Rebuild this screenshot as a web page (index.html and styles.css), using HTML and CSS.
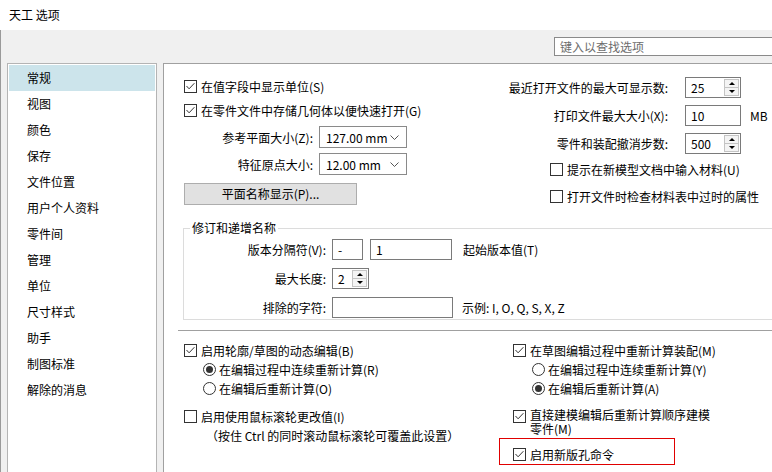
FILE: index.html
```html
<!DOCTYPE html>
<html lang="zh-CN">
<head>
    <meta charset="UTF-8">
    <title>天工 选项</title>
    <link rel="stylesheet" href="styles.css">
</head>
<body>
    <div class="titlebar">天工 选项</div>
    <div class="frame">
        <div class="searchbar">
            <div class="search">键入以查找选项</div>
        </div>
        <div class="body">
            <ul class="nav">
                <li class="active">常规</li>
                <li>视图</li>
                <li>颜色</li>
                <li>保存</li>
                <li>文件位置</li>
                <li>用户个人资料</li>
                <li>零件间</li>
                <li>管理</li>
                <li>单位</li>
                <li>尺寸样式</li>
                <li>助手</li>
                <li>制图标准</li>
                <li>解除的消息</li>
            </ul>

            <div class="panel">
                <div class="top">
                    <div class="top-left">
                        <div class="check-row">
                            <svg class="cb" viewBox="0 0 13 13"><rect x=".5" y=".5" width="12" height="12" fill="#fff" stroke="#333"/><path d="M2.5 6l2.6 2.8 5.3-5.6" fill="none" stroke="#333"/></svg>
                            <span>在值字段中显示单位(S)</span>
                        </div>
                        <div class="check-row">
                            <svg class="cb" viewBox="0 0 13 13"><rect x=".5" y=".5" width="12" height="12" fill="#fff" stroke="#333"/><path d="M2.5 6l2.6 2.8 5.3-5.6" fill="none" stroke="#333"/></svg>
                            <span>在零件文件中存储几何体以便快速打开(G)</span>
                        </div>
                        <div class="field-row first">
                            <span class="label">参考平面大小(Z):</span>
                            <div class="select">
                                <span>127.00 mm</span>
                                <svg class="chev" viewBox="0 0 9 5"><path d="M.5 .5l4 4 4-4" fill="none" stroke="#555"/></svg>
                            </div>
                        </div>
                        <div class="field-row">
                            <span class="label">特征原点大小:</span>
                            <div class="select">
                                <span>12.00 mm</span>
                                <svg class="chev" viewBox="0 0 9 5"><path d="M.5 .5l4 4 4-4" fill="none" stroke="#555"/></svg>
                            </div>
                        </div>
                        <div class="btn">平面名称显示(P)...</div>
                    </div>

                    <div class="top-right">
                        <div class="spin-row">
                            <span class="label">最近打开文件的最大可显示数:</span>
                            <div class="spinbox">
                                <span class="val">25</span>
                                <div class="spin"><span><i class="up"></i></span><span><i class="down"></i></span></div>
                            </div>
                        </div>
                        <div class="spin-row">
                            <span class="label">打印文件最大大小(X):</span>
                            <div class="spinbox">
                                <span class="val">10</span>
                            </div>
                            <span class="unit">MB</span>
                        </div>
                        <div class="spin-row">
                            <span class="label">零件和装配撤消步数:</span>
                            <div class="spinbox">
                                <span class="val">500</span>
                                <div class="spin"><span><i class="up"></i></span><span><i class="down"></i></span></div>
                            </div>
                        </div>
                        <div class="check-row right first">
                            <svg class="cb" viewBox="0 0 13 13"><rect x=".5" y=".5" width="12" height="12" fill="#fff" stroke="#333"/></svg>
                            <span>提示在新模型文档中输入材料(U)</span>
                        </div>
                        <div class="check-row right second">
                            <svg class="cb" viewBox="0 0 13 13"><rect x=".5" y=".5" width="12" height="12" fill="#fff" stroke="#333"/></svg>
                            <span>打开文件时检查材料表中过时的属性</span>
                        </div>
                    </div>
                </div>

                <fieldset class="group">
                    <legend>修订和递增名称</legend>
                    <div class="group-row">
                        <span class="label">版本分隔符(V):</span>
                        <div class="input w-sep">-</div>
                        <div class="input w-start">1</div>
                        <span class="note">起始版本值(T)</span>
                    </div>
                    <div class="group-row">
                        <span class="label">最大长度:</span>
                        <div class="spinbox w-len">
                            <span class="val">2</span>
                            <div class="spin"><span><i class="up"></i></span><span><i class="down"></i></span></div>
                        </div>
                    </div>
                    <div class="group-row">
                        <span class="label">排除的字符:</span>
                        <div class="input w-excl"></div>
                        <span class="note example">示例: I, O, Q, S, X, Z</span>
                    </div>
                </fieldset>

                <div class="sep"></div>

                <div class="bottom">
                    <div class="bcol left">
                        <div class="check-row b">
                            <svg class="cb" viewBox="0 0 13 13"><rect x=".5" y=".5" width="12" height="12" fill="#fff" stroke="#333"/><path d="M2.5 6l2.6 2.8 5.3-5.6" fill="none" stroke="#333"/></svg>
                            <span>启用轮廓/草图的动态编辑(B)</span>
                        </div>
                        <div class="radio-row">
                            <span class="radio on"></span>
                            <span>在编辑过程中连续重新计算(R)</span>
                        </div>
                        <div class="radio-row">
                            <span class="radio"></span>
                            <span>在编辑后重新计算(O)</span>
                        </div>
                        <div class="check-row b gap">
                            <svg class="cb" viewBox="0 0 13 13"><rect x=".5" y=".5" width="12" height="12" fill="#fff" stroke="#333"/></svg>
                            <span>启用使用鼠标滚轮更改值(I)</span>
                        </div>
                        <div class="hint">（按住 Ctrl 的同时滚动鼠标滚轮可覆盖此设置）</div>
                    </div>

                    <div class="bcol">
                        <div class="check-row b">
                            <svg class="cb" viewBox="0 0 13 13"><rect x=".5" y=".5" width="12" height="12" fill="#fff" stroke="#333"/><path d="M2.5 6l2.6 2.8 5.3-5.6" fill="none" stroke="#333"/></svg>
                            <span>在草图编辑过程中重新计算装配(M)</span>
                        </div>
                        <div class="radio-row">
                            <span class="radio"></span>
                            <span>在编辑过程中连续重新计算(Y)</span>
                        </div>
                        <div class="radio-row">
                            <span class="radio on"></span>
                            <span>在编辑后重新计算(A)</span>
                        </div>
                        <div class="check-row multi">
                            <svg class="cb" viewBox="0 0 13 13"><rect x=".5" y=".5" width="12" height="12" fill="#fff" stroke="#333"/><path d="M2.5 6l2.6 2.8 5.3-5.6" fill="none" stroke="#333"/></svg>
                            <span class="wrap">直接建模编辑后重新计算顺序建模零件(M)</span>
                        </div>
                        <div class="highlight">
                            <div class="check-row b">
                                <svg class="cb" viewBox="0 0 13 13"><rect x=".5" y=".5" width="12" height="12" fill="#fff" stroke="#333"/><path d="M2.5 6l2.6 2.8 5.3-5.6" fill="none" stroke="#333"/></svg>
                                <span>启用新版孔命令</span>
                            </div>
                        </div>
                    </div>
                </div>
            </div>
        </div>
    </div>
</body>
</html>
```

FILE: styles.css
```css
* {
    box-sizing: border-box;
}
body {
    margin: 0;
    width: 772px;
    height: 472px;
    overflow: hidden;
    background: #f0f0f0;
    color: #000;
    font-family: "Noto Sans CJK SC", "Liberation Sans", sans-serif;
    font-size: 12px;
}
.titlebar {
    height: 30px;
    line-height: 30px;
    padding-left: 9px;
    background: #fff;
}
.frame {
    height: 442px;
    border-left: 1px solid #9a9a9a;
    display: flex;
    flex-direction: column;
}
.searchbar {
    height: 33px;
    padding-top: 7px;
    display: flex;
    justify-content: flex-end;
    align-items: flex-start;
}
.search {
    width: 219px;
    height: 19px;
    margin-right: -1px;
    padding-left: 5px;
    line-height: 17px;
    border: 1px solid #8a8a8a;
    background: #fff;
    color: #6d6d6d;
}
.body {
    flex: 1;
    display: flex;
    min-height: 0;
}

/* 左侧分类列表 */
.nav {
    width: 150px;
    margin: 0 6px;
    padding: 1px;
    list-style: none;
    background: #fff;
    border: 1px solid #b4b4b4;
    border-bottom: none;
}
.nav li {
    height: 26px;
    line-height: 26px;
    padding-left: 18px;
}
.nav li.active {
    background: #cce4eb;
}

/* 右侧内容 */
.panel {
    flex: 1;
    background: #fff;
    border-left: 1px solid #a0a0a0;
    border-top: 1px solid #a0a0a0;
}
.top {
    display: flex;
    padding: 10px 0 0 20px;
}
.top-left {
    width: 316px;
}
.check-row {
    display: flex;
    align-items: center;
    height: 24px;
    gap: 4px;
    white-space: nowrap;
}
.cb {
    width: 13px;
    height: 13px;
    flex: none;
}
.field-row {
    display: flex;
    align-items: center;
    height: 22px;
    margin-top: 5px;
}
.field-row.first {
    margin-top: 4px;
}
.field-row .label {
    width: 129px;
    text-align: right;
    margin-right: 6px;
}
.select {
    width: 88px;
    height: 22px;
    padding: 0 7px 0 6px;
    border: 1px solid #8a8a8a;
    display: flex;
    align-items: center;
    justify-content: space-between;
}
.chev {
    width: 9px;
    height: 5px;
}
.btn {
    width: 173px;
    height: 22px;
    margin-top: 8px;
    line-height: 20px;
    text-align: center;
    background: #e1e1e1;
    border: 1px solid #adadad;
}
.top-right {
    padding-top: 3px;
}
.spin-row {
    display: flex;
    align-items: center;
    height: 21px;
    margin-bottom: 7px;
}
.spin-row:nth-child(3) {
    margin-bottom: 0;
}
.spin-row .label {
    width: 168px;
    margin-right: 17px;
    text-align: right;
    white-space: nowrap;
}
.spinbox {
    width: 56px;
    height: 21px;
    border: 1px solid #7a7a7a;
    display: flex;
    align-items: center;
}
.spinbox .val {
    padding-left: 5px;
}
.spin {
    margin-left: auto;
    width: 16px;
    height: 100%;
    padding: 1px 1px 1px 0;
    display: flex;
    flex-direction: column;
}
.spin span {
    flex: 1;
    display: flex;
    align-items: center;
    justify-content: center;
    background: #f4f4f4;
    border: 1px solid #c4c4c4;
}
.spin span + span {
    border-top: none;
}
.up {
    border-left: 3px solid transparent;
    border-right: 3px solid transparent;
    border-bottom: 3px solid #000;
}
.down {
    border-left: 3px solid transparent;
    border-right: 3px solid transparent;
    border-top: 3px solid #000;
}
.unit {
    margin-left: 9px;
}
.check-row.right {
    height: 20px;
    margin-left: 50px;
}
.check-row.right.first {
    margin-top: 5px;
}
.check-row.right.second {
    margin-top: 7px;
}

/* 修订和递增名称 */
.group {
    margin: 14px -10px 0 19px;
    padding: 3px 0 1px 0;
    border: 1px solid #dcdcdc;
    min-width: 0;
}
.group legend {
    margin-left: 6px;
    padding: 0 2px;
    line-height: 16px;
}
.group-row {
    display: flex;
    align-items: center;
    height: 21px;
    margin-bottom: 8px;
}
.group-row:last-child {
    margin-bottom: 0;
}
.group-row .label {
    width: 142px;
    margin-right: 6px;
    text-align: right;
}
.input {
    height: 21px;
    padding-left: 5px;
    line-height: 19px;
    border: 1px solid #7a7a7a;
}
.w-sep {
    width: 31px;
}
.w-start {
    width: 82px;
    margin-left: 7px;
}
.w-excl {
    width: 121px;
}
.w-len {
    width: 37px;
}
.note {
    margin-left: 11px;
}
.note.example {
    margin-left: 9px;
}
.sep {
    height: 1px;
    margin: 10px 0 0 14px;
    background: #a0a0a0;
}

/* 下部选项 */
.bottom {
    display: flex;
    padding: 9px 0 0 20px;
}
.bcol.left {
    width: 329px;
}
.check-row.b {
    height: 20px;
}
.check-row.gap {
    margin-top: 8px;
}
.radio-row {
    display: flex;
    align-items: center;
    gap: 3px;
    height: 19px;
    padding-left: 19px;
    white-space: nowrap;
}
.radio {
    width: 13px;
    height: 13px;
    border: 1px solid #333;
    border-radius: 50%;
    display: flex;
    align-items: center;
    justify-content: center;
}
.radio.on::after {
    content: "";
    width: 7px;
    height: 7px;
    border-radius: 50%;
    background: #333;
}
.hint {
    height: 20px;
    line-height: 20px;
    padding-left: 22px;
    white-space: nowrap;
}
.check-row.multi {
    height: auto;
    align-items: flex-start;
    margin-top: 8px;
}
.check-row.multi .cb {
    margin-top: 4px;
}
.wrap {
    width: 186px;
    margin-top: 2px;
    line-height: 14px;
    white-space: normal;
}
.highlight {
    width: 176px;
    height: 27px;
    margin: 2px 0 0 -14px;
    padding: 5px 0 0 13px;
    border: 1px solid #e00000;
}
.highlight .check-row {
    height: 20px;
}
```
